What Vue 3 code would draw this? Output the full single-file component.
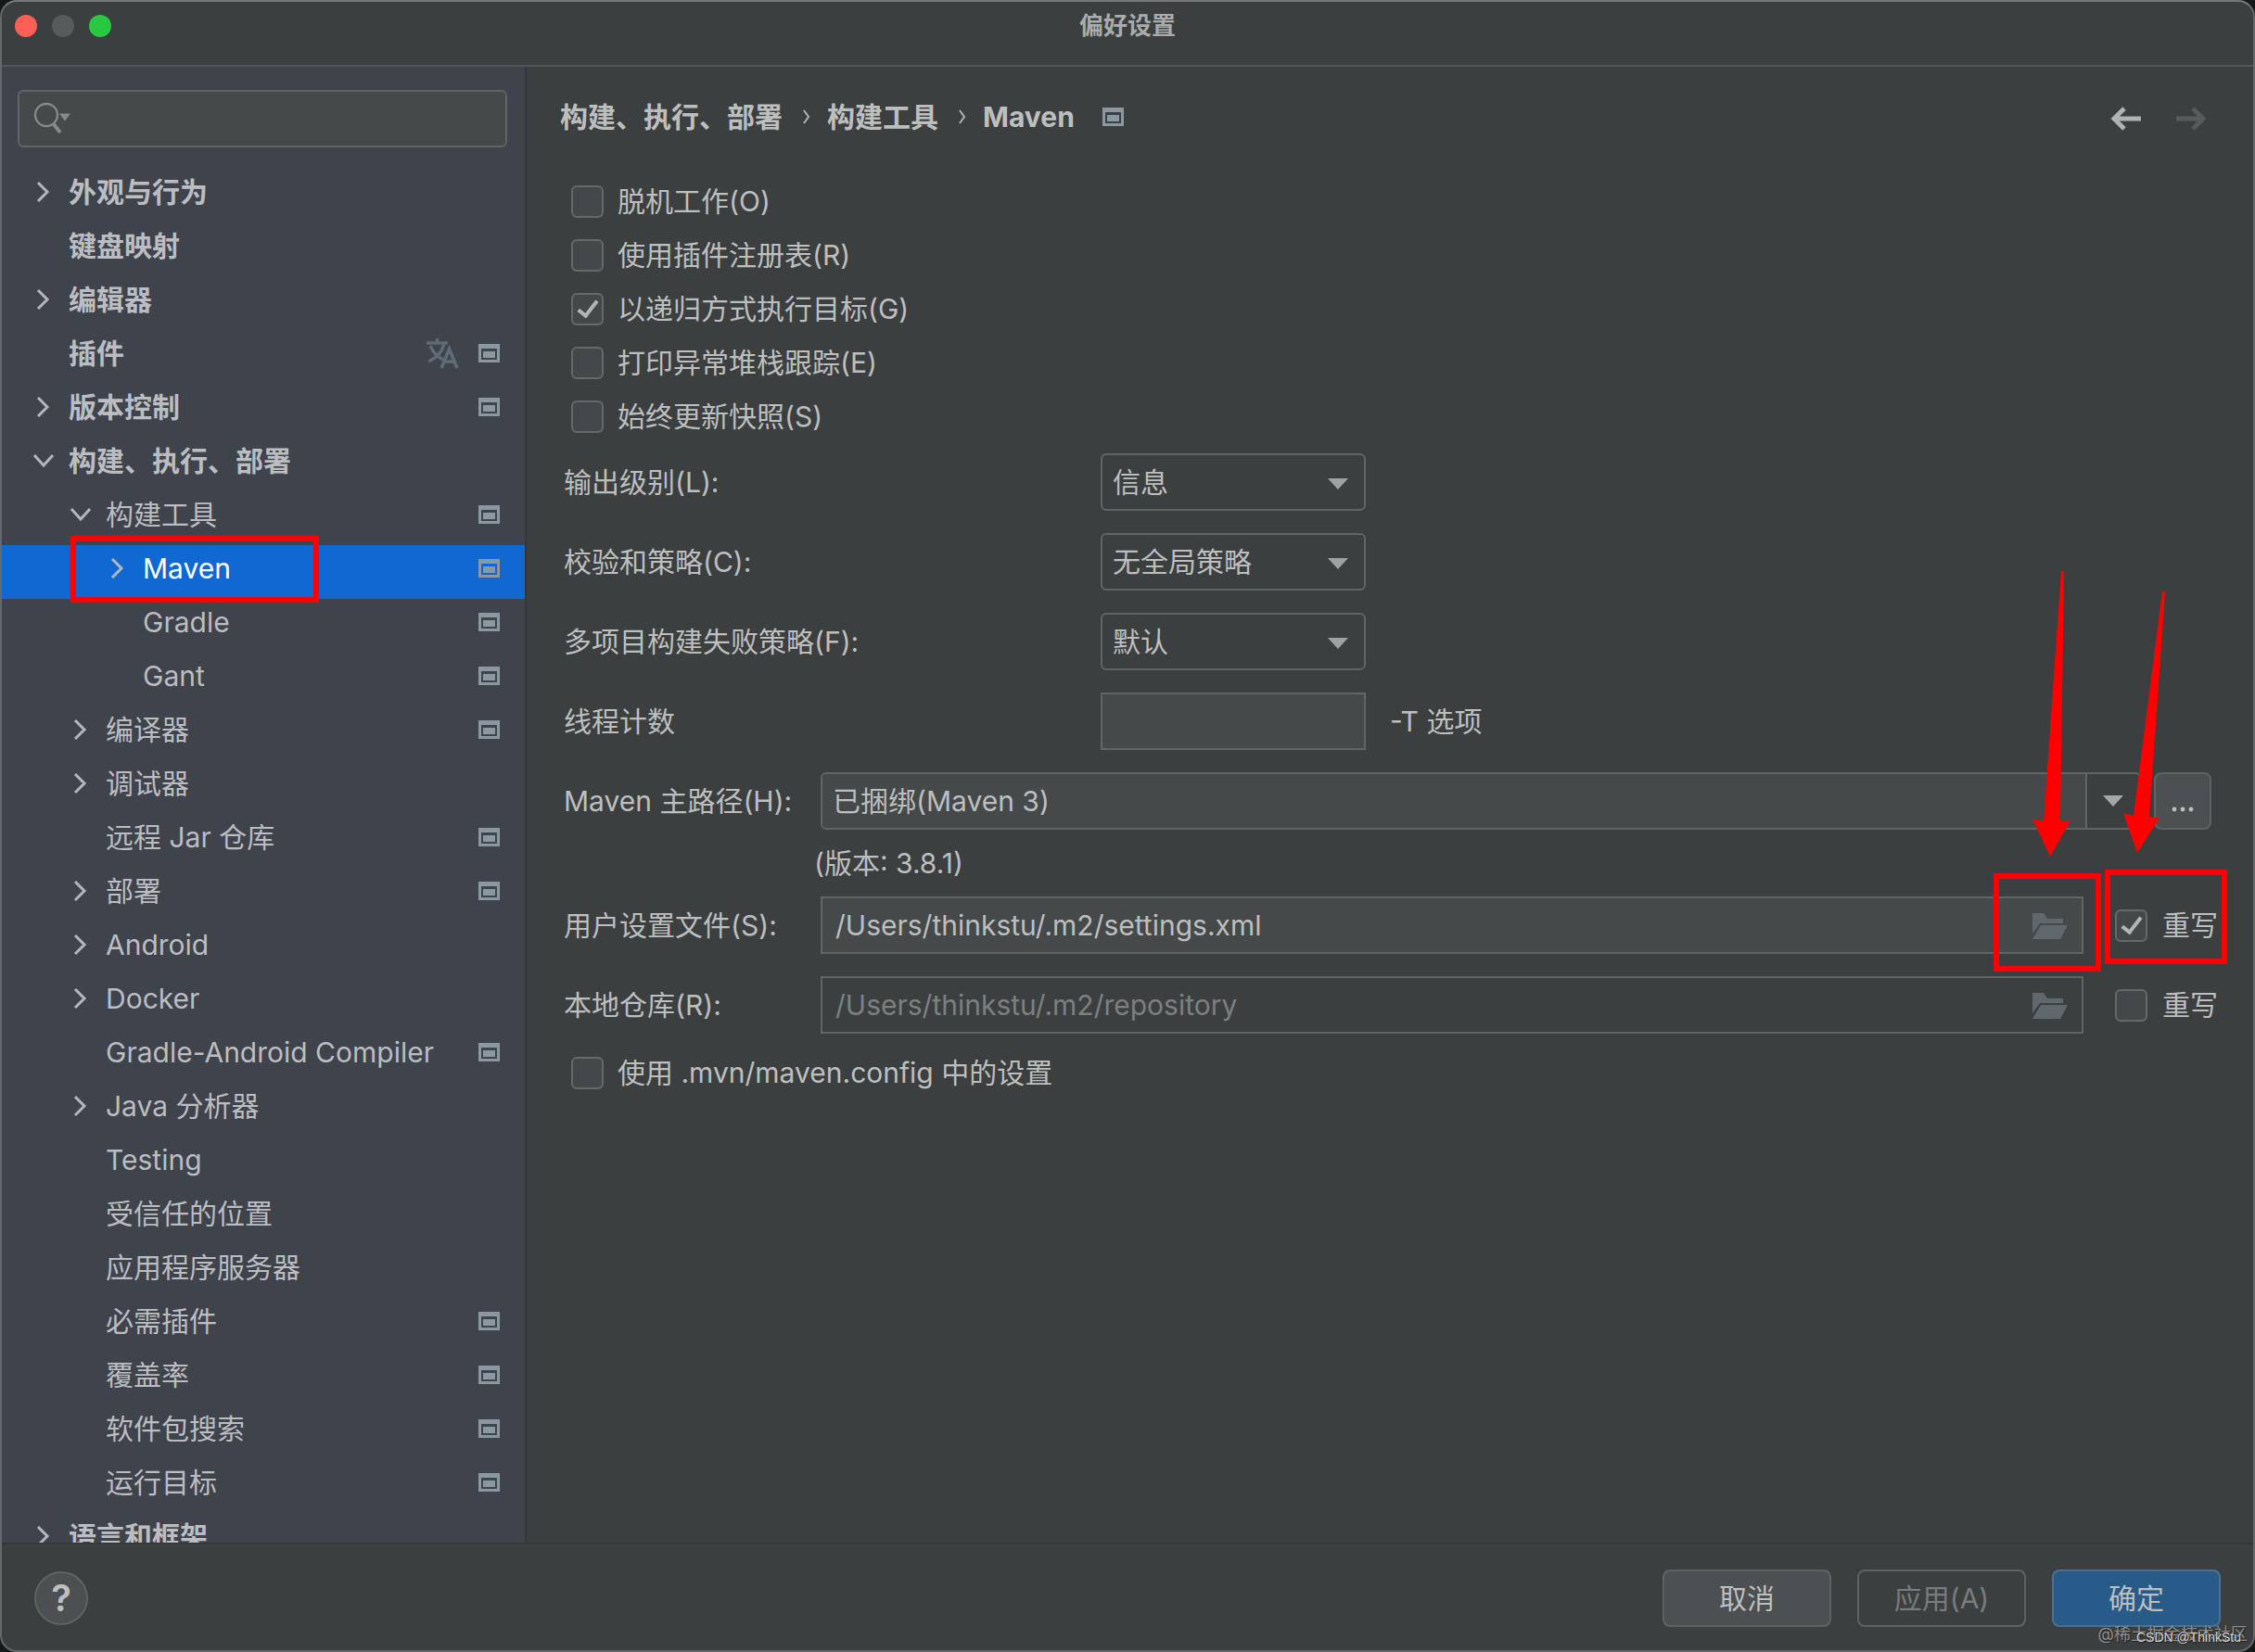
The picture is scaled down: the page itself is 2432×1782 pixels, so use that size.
<template>
  <div class="window">
    <header class="titlebar">
      <div class="lights">
        <button class="light close" aria-label="关闭"></button>
        <button class="light minimize" aria-label="最小化" disabled></button>
        <button class="light zoom" aria-label="缩放"></button>
      </div>
      <h1 class="window-title">偏好设置</h1>
    </header>

    <div class="body">
      <aside class="sidebar">
        <div class="search">
          <svg class="search-icon" viewBox="0 0 42 38" aria-hidden="true">
            <circle cx="14" cy="15" r="12" fill="none" stroke="#84898c" stroke-width="2.4" />
            <path d="M21.500 24.500L29 34" stroke="#84898c" stroke-width="4" />
            <path d="M28 13.500h12l-6 8z" fill="#84898c" />
          </svg>
          <input v-model="query" class="search-input" type="text" aria-label="搜索设置" />
        </div>

        <ul class="tree">
          <li
            v-for="item in items"
            :key="item.name"
            class="tree-row"
            :class="['level-' + item.level, { selected: item.name === selected }]"
            @click="selected = item.name"
          >
            <span class="arrow-slot">
              <svg v-if="item.arrow === 'right'" class="arrow" viewBox="0 0 24 24" aria-hidden="true">
                <path d="M6 2l10 10L6 22" />
              </svg>
              <svg v-else-if="item.arrow === 'down'" class="arrow" viewBox="0 0 24 24" aria-hidden="true">
                <path d="M2 6l10 11L22 6" />
              </svg>
            </span>
            <span class="tree-name">{{ item.name }}</span>
            <svg v-if="item.translate" class="translate-icon" viewBox="0 0 36 34" aria-hidden="true">
              <path d="M0 6h23M11.500 1v5M4 9c3 7 8 12 14 15M19 7C17 15 11 22 2 26" fill="none" stroke="currentColor" stroke-width="3.4" />
              <path d="M16 33l8.500-20.500L33 33M19 26h11" fill="none" stroke="currentColor" stroke-width="3.600" />
            </svg>
            <svg v-if="item.project" class="project-icon" viewBox="0 0 23 20" aria-hidden="true">
              <path fill-rule="evenodd" d="M0 0h23v20H0zM3 5v12h17V5z" />
              <path d="M5 8h13v7H5z" />
            </svg>
            <span v-if="item.name === 'Maven'" class="mark mark-tree"></span>
          </li>
        </ul>
      </aside>

      <main class="main">
        <div class="main-header">
          <nav class="crumbs">
            <a href="#" @click.prevent>构建、执行、部署</a>
            <svg class="crumb-sep" viewBox="0 0 8 18" aria-hidden="true"><path d="M1 2l5 7-5 7" /></svg>
            <a href="#" @click.prevent>构建工具</a>
            <svg class="crumb-sep" viewBox="0 0 8 18" aria-hidden="true"><path d="M1 2l5 7-5 7" /></svg>
            <a href="#" @click.prevent>Maven</a>
            <svg class="project-icon crumb-icon" viewBox="0 0 23 20" aria-hidden="true">
              <path fill-rule="evenodd" d="M0 0h23v20H0zM3 5v12h17V5z" />
              <path d="M5 8h13v7H5z" />
            </svg>
          </nav>
          <div class="history">
            <button class="history-btn" aria-label="后退">
              <svg viewBox="0 0 34 26"><path d="M33 13H4M15 2L4 13l11 11" /></svg>
            </button>
            <button class="history-btn" aria-label="前进" disabled>
              <svg viewBox="0 0 34 26"><path d="M1 13h29M19 2l11 11-11 11" /></svg>
            </button>
          </div>
        </div>

        <div class="checks">
          <label v-for="opt in options" :key="opt.label" class="check-row">
            <input v-model="opt.checked" type="checkbox" class="check" />
            <span>{{ opt.label }}</span>
          </label>
        </div>

        <div class="form">
          <div v-for="field in selects" :key="field.id" class="form-row">
            <label class="form-label wide" :for="field.id">{{ field.label }}</label>
            <div class="select-wrap">
              <select :id="field.id" v-model="field.value" class="select">
                <option v-for="o in field.choices" :key="o">{{ o }}</option>
              </select>
              <svg class="select-arrow" viewBox="0 0 22 12" aria-hidden="true"><path d="M0 0h22L11 12z" /></svg>
            </div>
          </div>

          <div class="form-row">
            <label class="form-label wide" for="threads">线程计数</label>
            <input id="threads" v-model="threads" class="text-input threads" type="text" />
            <span class="hint">-T 选项</span>
          </div>

          <div class="form-row home-row">
            <label class="form-label" for="home">Maven 主路径(H):</label>
            <div class="combo">
              <input id="home" v-model="home" class="combo-input" type="text" />
              <button class="combo-btn" aria-label="展开列表">
                <svg viewBox="0 0 22 12"><path d="M0 0h22L11 12z" /></svg>
              </button>
            </div>
            <button class="btn browse-btn" aria-label="浏览">
              <svg viewBox="0 0 24 6"><circle cx="3" cy="3" r="2.400" /><circle cx="12" cy="3" r="2.400" /><circle cx="21" cy="3" r="2.400" /></svg>
            </button>
          </div>

          <p class="version">(版本: 3.8.1)</p>

          <div v-for="file in files" :key="file.id" class="form-row">
            <label class="form-label" :for="file.id">{{ file.label }}</label>
            <div class="file-field">
              <input :id="file.id" v-model="file.path" class="text-input file-input" type="text" :disabled="!file.override" />
              <button class="folder-btn" aria-label="选择文件">
                <svg viewBox="0 0 38 28">
                  <path d="M0 0h12l4 6h17v5H8L0 22z" />
                  <path d="M9 13h29l-8 15H0z" />
                </svg>
              </button>
              <template v-if="file.marked">
                <span class="mark mark-folder"></span>
                <svg class="pointer pointer-folder" viewBox="0 0 42 310" aria-hidden="true">
                  <path d="M32 1q2-2 3 1L31 270l11 0L20 309 1 268l12 3z" />
                </svg>
              </template>
            </div>
            <div class="override">
              <label class="check-label">
                <input v-model="file.override" type="checkbox" class="check" />
                <span>重写</span>
              </label>
              <template v-if="file.marked">
                <span class="mark mark-override"></span>
                <svg class="pointer pointer-override" viewBox="0 0 48 284" aria-hidden="true">
                  <path d="M43 1q2-1 3 1L29 244l11 1L16 283 1 240l11 3z" />
                </svg>
              </template>
            </div>
          </div>
        </div>

        <div class="checks config-check">
          <label class="check-row">
            <input v-model="useConfig" type="checkbox" class="check" />
            <span>使用 .mvn/maven.config 中的设置</span>
          </label>
        </div>
      </main>
    </div>

    <footer class="footer">
      <button class="help" aria-label="帮助">?</button>
      <div class="actions">
        <button class="btn action">取消</button>
        <button class="btn action" disabled>应用(A)</button>
        <button class="btn action primary">确定</button>
      </div>
      <span class="credit credit-site">@稀土掘金技术社区</span>
      <span class="credit credit-author">CSDN @ThinkStu</span>
    </footer>
  </div>
</template>

<script setup>
import { ref, reactive } from 'vue'

const query = ref('')
const selected = ref('Maven')

const items = [
  { name: '外观与行为', level: 0, arrow: 'right' },
  { name: '键盘映射', level: 0 },
  { name: '编辑器', level: 0, arrow: 'right' },
  { name: '插件', level: 0, translate: true, project: true },
  { name: '版本控制', level: 0, arrow: 'right', project: true },
  { name: '构建、执行、部署', level: 0, arrow: 'down' },
  { name: '构建工具', level: 1, arrow: 'down', project: true },
  { name: 'Maven', level: 2, arrow: 'right', project: true },
  { name: 'Gradle', level: 2, project: true },
  { name: 'Gant', level: 2, project: true },
  { name: '编译器', level: 1, arrow: 'right', project: true },
  { name: '调试器', level: 1, arrow: 'right' },
  { name: '远程 Jar 仓库', level: 1, project: true },
  { name: '部署', level: 1, arrow: 'right', project: true },
  { name: 'Android', level: 1, arrow: 'right' },
  { name: 'Docker', level: 1, arrow: 'right' },
  { name: 'Gradle-Android Compiler', level: 1, project: true },
  { name: 'Java 分析器', level: 1, arrow: 'right' },
  { name: 'Testing', level: 1 },
  { name: '受信任的位置', level: 1 },
  { name: '应用程序服务器', level: 1 },
  { name: '必需插件', level: 1, project: true },
  { name: '覆盖率', level: 1, project: true },
  { name: '软件包搜索', level: 1, project: true },
  { name: '运行目标', level: 1, project: true },
  { name: '语言和框架', level: 0, arrow: 'right' }
]

const options = reactive([
  { label: '脱机工作(O)', checked: false },
  { label: '使用插件注册表(R)', checked: false },
  { label: '以递归方式执行目标(G)', checked: true },
  { label: '打印异常堆栈跟踪(E)', checked: false },
  { label: '始终更新快照(S)', checked: false }
])

const selects = reactive([
  { id: 'output', label: '输出级别(L):', value: '信息', choices: ['信息'] },
  { id: 'checksum', label: '校验和策略(C):', value: '无全局策略', choices: ['无全局策略'] },
  { id: 'fail', label: '多项目构建失败策略(F):', value: '默认', choices: ['默认'] }
])

const threads = ref('')
const home = ref('已捆绑(Maven 3)')
const useConfig = ref(false)

const files = reactive([
  { id: 'settings', label: '用户设置文件(S):', path: '/Users/thinkstu/.m2/settings.xml', override: true, marked: true },
  { id: 'repo', label: '本地仓库(R):', path: '/Users/thinkstu/.m2/repository', override: false }
])
</script>

<style>
body { background: #15181a; }
</style>

<style scoped>
.window {
  box-sizing: border-box; height: 100vh; display: flex; flex-direction: column;
  border: 2px solid #64686a; border-top-color: #74787a; border-radius: 18px; overflow: hidden; position: relative;
  background: #3c3f40; color: #bdbfbf;
  font-family: Inter, "Noto Sans CJK SC", sans-serif; font-size: 30px; line-height: 40px;
}
.window *, .window *::before { box-sizing: border-box; }
button, input, select { font: inherit; color: inherit; margin: 0; padding: 0; border: none; background: none; outline: none; }

/* title bar */
.titlebar {
  flex: none; height: 70px; padding: 0 14px 16px; border-bottom: 2px solid #535758;
  display: grid; grid-template-columns: 1fr auto 1fr; align-items: center;
}
.lights { display: flex; gap: 16px; }
.light { width: 24px; height: 24px; border-radius: 50%; }
.light.close { background: #ff5f57; }
.light.minimize { background: #575b5c; }
.light.zoom { background: #28c840; }
.window-title { margin: 0; font-size: 26px; font-weight: 700; line-height: 40px; color: #a9abac; }

.body { flex: 1; min-height: 0; display: flex; }

/* sidebar */
.sidebar {
  flex: none; width: 566px; padding-top: 25px; border-right: 2px solid #343738;
  background: #3f434c; color: #bbbdc1; display: flex; flex-direction: column;
}
.search {
  flex: none; height: 62px; margin: 0 19px 23px 17px; padding-left: 15px; display: flex; align-items: center;
  border: 2px solid #5f6465; border-radius: 6px; background: #45494a;
}
.search-icon { width: 42px; height: 38px; }
.search-input { flex: 1; min-width: 0; padding: 0 8px; }
.tree { flex: 1; min-height: 0; margin: 0; padding: 0; list-style: none; overflow: hidden; }
.tree-row {
  position: relative; height: 58px; padding: 0 27px 8px 33px;
  display: flex; align-items: center; cursor: default;
}
.tree-row.level-0 { font-weight: 700; }
.tree-row.level-1 { padding-left: 73px; }
.tree-row.level-2 { padding-left: 113px; }
.tree-row.selected { background: #1068d3; color: #fff; }
.arrow-slot { flex: none; width: 39px; height: 24px; }
.arrow { display: block; width: 24px; height: 24px; fill: none; stroke: #b3b6ba; stroke-width: 3; }
.tree-name { flex: 1; white-space: nowrap; }
.translate-icon { width: 36px; height: 34px; margin-right: 20px; color: #5f6a76; }
.project-icon { flex: none; width: 23px; height: 20px; fill: #8b98a2; }

/* main */
.main { flex: 1; min-width: 0; padding: 0 38px 0 36px; }
.main-header { height: 108px; display: flex; justify-content: space-between; align-items: center; padding-right: 12px; }
.crumbs { display: flex; align-items: center; font-weight: 700; }
.crumbs a { color: inherit; text-decoration: none; }
.crumb-sep { width: 8px; height: 18px; margin: 0 18px 0 22px; fill: none; stroke: #b0b3b3; stroke-width: 2; }
.crumb-icon { margin-left: 30px; }
.history { display: flex; gap: 36px; padding-top: 4px; }
.history-btn { display: flex; }
.history-btn svg { width: 34px; height: 26px; fill: none; stroke: #aeb2b3; stroke-width: 5; }
.history-btn:disabled svg { stroke: #585b5c; }

.checks { padding: 8px 0 11px 12px; }
.check-row { height: 58px; display: flex; align-items: center; gap: 15px; }
.check {
  appearance: none; flex: none; width: 35px; height: 35px;
  border: 2px solid #65696a; border-radius: 6px; background: #43494a;
}
.check:checked::before {
  content: ''; display: block; width: 12px; height: 22px; margin: 2px 0 0 10px;
  border: solid #b4b7b8; border-width: 0 4px 4px 0; transform: rotate(38deg);
}

.form { padding-left: 4px; display: flex; flex-direction: column; gap: 24px; }
.form-row { display: flex; align-items: center; height: 62px; }
.form-label { flex: none; width: 277px; white-space: nowrap; }
.form-label.wide { width: 579px; }
.select-wrap { position: relative; width: 286px; height: 62px; }
.select {
  appearance: none; width: 100%; height: 100%; padding: 0 44px 0 11px;
  border: 2px solid #616566; border-radius: 6px;
}
.select-arrow { position: absolute; right: 19px; top: 27px; width: 22px; height: 12px; fill: #9fa2a3; pointer-events: none; }
.text-input { height: 62px; border: 2px solid #616566; background: #45494a; }
.threads { width: 286px; padding: 0 12px; }
.hint { margin-left: 26px; }

.home-row { padding-right: 7px; }
.combo { flex: 1; min-width: 0; height: 62px; display: flex; border: 2px solid #616566; border-radius: 6px; overflow: hidden; }
.combo-input { flex: 1; min-width: 0; padding: 0 11px; background: #45494a; }
.combo-btn { width: 58px; border-left: 2px solid #616566; display: flex; align-items: center; justify-content: center; }
.combo-btn svg { width: 22px; height: 12px; fill: #a4a7a8; }
.btn { height: 62px; border: 2px solid #5e6263; border-radius: 8px; background: #4c5052; }
.browse-btn { width: 62px; margin-left: 14px; padding-top: 18px; display: flex; align-items: center; justify-content: center; }
.browse-btn svg { width: 24px; height: 6px; fill: #bdbfbf; }

.version { margin: -8px 0; padding-left: 270px; line-height: 40px; }

.file-field { position: relative; flex: 1; min-width: 0; display: flex; }
.file-input { width: 100%; padding: 0 70px 0 14px; }
.file-input:disabled { background: transparent; color: #7d8081; }
.folder-btn { position: absolute; right: 17px; top: 18px; display: flex; }
.folder-btn svg { width: 38px; height: 28px; fill: #5f686c; }
.override { position: relative; flex: none; width: 145px; padding-left: 34px; }
.check-label { display: flex; align-items: center; gap: 16px; white-space: nowrap; }

/* red annotations */
.mark { position: absolute; border: 6px solid #fe0000; pointer-events: none; z-index: 1; }
.mark-tree { left: 74px; top: -10px; width: 268px; height: 72px; }
.mark-folder { right: -19px; top: -25px; width: 116px; height: 106px; }
.mark-override { left: 23px; top: -40px; width: 132px; height: 102px; }
.pointer { position: absolute; z-index: 1; fill: #fe0000; pointer-events: none; }
.pointer-folder { right: 14px; bottom: 104px; width: 42px; height: 310px; }
.pointer-override { left: 42px; bottom: 97px; width: 48px; height: 284px; }

.config-check { padding-top: 13px; }

/* footer */
.footer {
  position: relative; flex: none; height: 116px; padding: 2px 35px 0; border-top: 2px solid #343738;
  display: flex; justify-content: space-between; align-items: center;
}
.help {
  width: 58px; height: 58px; border: 2px solid #5e6263; border-radius: 50%; background: #4c5052;
  font-size: 40px; font-weight: 600;
}
.actions { display: flex; gap: 28px; }
.action { width: 182px; }
.action:disabled { background: transparent; color: #797c7d; }
.action.primary { background: #285b88; border-color: #4b7192; }
.credit { position: absolute; white-space: nowrap; line-height: 20px; text-shadow: 1px 1px 1px #222; }
.credit-site { right: 6px; bottom: 7px; font-size: 18px; color: #8b8e8f; }
.credit-author { right: 13px; bottom: 4px; font-family: "Liberation Sans", sans-serif; font-size: 14px; color: #d0d2d2; }
</style>
